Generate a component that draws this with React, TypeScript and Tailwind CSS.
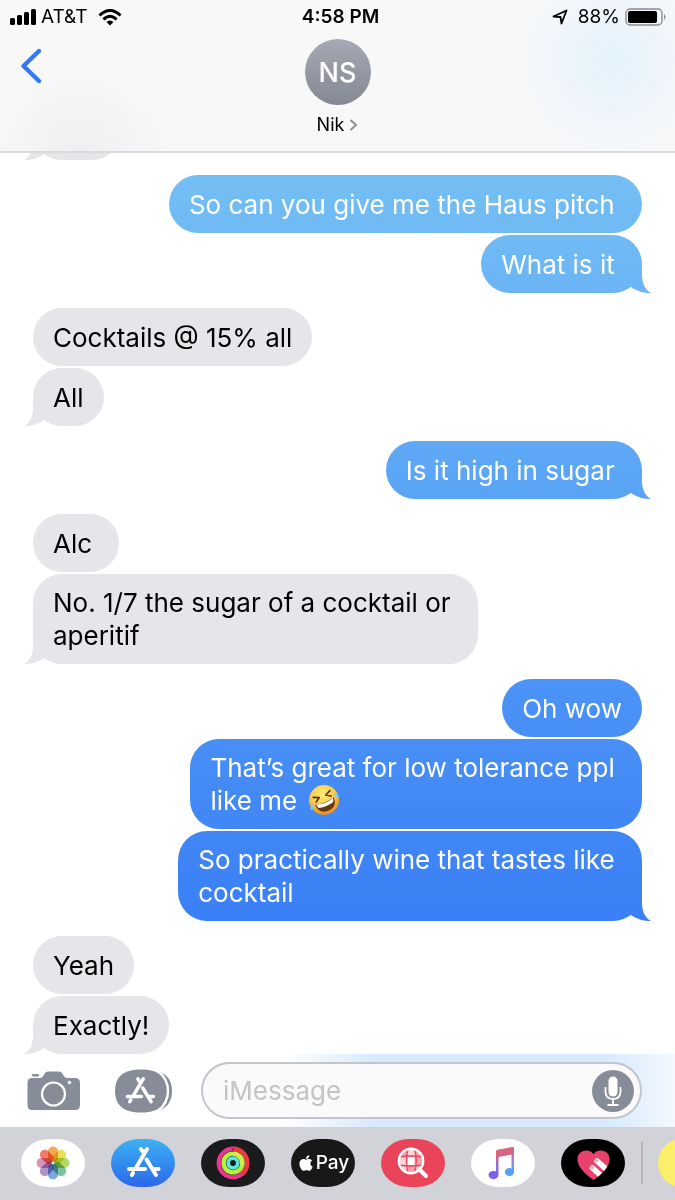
import type { ReactNode } from "react";
import { FaApple } from "react-icons/fa";

type Message = { from: "me" | "them"; text: string; emoji?: boolean };

const groups: Message[][] = [
  [
    { from: "me", text: "So can you give me the Haus pitch " },
    { from: "me", text: "What is it " },
  ],
  [
    { from: "them", text: "Cocktails @ 15% all" },
    { from: "them", text: "All" },
  ],
  [{ from: "me", text: "Is it high in sugar " }],
  [
    { from: "them", text: "Alc " },
    { from: "them", text: "No. 1/7 the sugar of a cocktail or \naperitif" },
  ],
  [
    { from: "me", text: "Oh wow" },
    { from: "me", text: "That’s great for low tolerance ppl \nlike me ", emoji: true },
    { from: "me", text: "So practically wine that tastes like \ncocktail" },
  ],
  [
    { from: "them", text: "Yeah" },
    { from: "them", text: "Exactly!" },
  ],
];

// Sent bubbles share one window-high gradient, so they get darker further down
const SENT =
  "bg-fixed bg-[linear-gradient(#7fcaf3,#74bef4_15%,#5ca6f6_39%,#4a91f6_59%,#3a7ff5_77%,#3a7ff5)] text-white";
const RECEIVED = "bg-[#e5e5ea] text-black";

function LaughEmoji() {
  return (
    <svg viewBox="0 0 32 32" role="img" aria-label="Rolling on the floor laughing" className="ml-1 inline-block size-8 align-[-6px]">
      <defs>
        <radialGradient id="face" cx="0.45" cy="0.3" r="0.7">
          <stop offset="0" stopColor="#ffec7a" />
          <stop offset="0.6" stopColor="#fbc845" />
          <stop offset="1" stopColor="#e08f22" />
        </radialGradient>
      </defs>
      <circle cx="16" cy="16" r="15" fill="url(#face)" />
      <g transform="rotate(-22 16 16)">
        <path d="M6 17 Q16 20 26 17 Q26 27.500 16 27.500 Q6 27.500 6 17Z" fill="#6b3710" />
        <path d="M7 17.500 Q16 20.500 25 17.500 Q25 20.500 23.500 21.500 Q16 23.500 8.500 21.500 Q7 20 7 17.500Z" fill="#fff" />
        <path d="M7 9.500 L12.500 12 L8 15 M25 9.500 L19.500 12 L24 15" fill="none" stroke="#56300f" strokeWidth="1.600" strokeLinecap="round" strokeLinejoin="round" />
        <path d="M26 15 Q31 14 31 18 Q29 20 26 15Z" fill="#7fcdf5" />
        <path d="M6 15 Q1 16 0 20 Q3 22 6 15Z" fill="#7fcdf5" />
      </g>
    </svg>
  );
}

function Tail({ sent }: { sent: boolean }) {
  return (
    <span
      aria-hidden="true"
      className={`absolute bottom-0 h-[29px] w-[31px] ${
        sent
          ? `${SENT} -right-[9px] [clip-path:path('M22_0L22_11C22_19_25_26_31_29C25_29_18_28_11_23L0_15L0_0Z')]`
          : `${RECEIVED} -left-[9px] [clip-path:path('M9_0L9_11C9_19_6_26_0_29C6_29_13_28_20_23L31_15L31_0Z')]`
      }`}
    />
  );
}

function Bubble({ message, tail }: { message: Message; tail: boolean }) {
  const sent = message.from === "me";
  return (
    <li
      className={`relative flex min-h-[58px] max-w-[80%] items-center rounded-[29px] px-5 py-3 ${
        sent ? `${SENT} self-end` : `${RECEIVED} self-start`
      }`}
    >
      {tail && <Tail sent={sent} />}
      <p className="relative whitespace-pre-wrap text-[26px] leading-[33px]">
        {message.text}
        {message.emoji && <LaughEmoji />}
      </p>
    </li>
  );
}

function StatusBar() {
  return (
    <div className="grid h-[34px] grid-cols-[1fr_auto_1fr] items-center pl-[10px] pr-2 text-[19px] leading-6">
      <div className="flex items-center">
        <svg viewBox="0 0 26 16" className="h-4 w-[26px]" aria-hidden="true">
          <rect x="0" y="9" width="5" height="7" rx="1.500" />
          <rect x="7" y="6" width="5" height="10" rx="1.500" />
          <rect x="14" y="3" width="5" height="13" rx="1.500" />
          <rect x="21" y="0" width="5" height="16" rx="1.500" />
        </svg>
        <span className="ml-[5px]">AT&amp;T</span>
        <svg viewBox="0 0 24 17" className="ml-[10px] h-[17px] w-6" aria-hidden="true">
          <path d="M1.500 6.500 Q12 -3.500 22.500 6.500" fill="none" stroke="#000" strokeWidth="3" />
          <path d="M5.500 10.500 Q12 4 18.500 10.500" fill="none" stroke="#000" strokeWidth="3" />
          <path d="M8.500 13 Q12 10 15.500 13 L12 16.500Z" />
        </svg>
      </div>
      <span className="pl-1 font-semibold">4:58 PM</span>
      <div className="flex items-center justify-end">
        <svg viewBox="0 0 16 16" className="size-4" aria-hidden="true">
          <path d="M1.500 7.500 L14.500 1.500 L9.500 14.500 L8.500 8 Z" fill="none" stroke="#000" strokeWidth="1.800" strokeLinejoin="round" />
        </svg>
        <span className="ml-[10px]">88%</span>
        <svg viewBox="0 0 42 18" className="ml-[5px] h-[18px] w-[42px]" aria-hidden="true">
          <rect x="1" y="1" width="36" height="16" rx="4" fill="none" stroke="#8c8c8e" strokeWidth="1.400" />
          <rect x="3" y="3" width="29" height="12" rx="2" />
          <path d="M39 6 Q42 9 39 12Z" fill="#8c8c8e" />
        </svg>
      </div>
    </div>
  );
}

function Header() {
  return (
    <header className="h-[153px] border-b-2 border-[#dadadc] bg-[#f8f8f9] bg-[radial-gradient(circle_at_612px_60px,#e3f2fc,transparent_100px),radial-gradient(circle_at_80px_150px,#efeff2,transparent_90px)]">
      <StatusBar />
      <div className="grid grid-cols-[1fr_auto_1fr] items-start px-5 pt-[5px]">
        <button type="button" aria-label="Back" className="mt-[9px] w-[22px]">
          <svg viewBox="0 0 22 36" className="h-9 w-[22px]">
            <path d="M19 3 L3.500 18 L19 33" fill="none" stroke="#3478f6" strokeWidth="4.400" strokeLinecap="round" strokeLinejoin="round" />
          </svg>
        </button>
        <button type="button" className="flex flex-col items-center">
          <span className="flex size-[66px] items-center justify-center rounded-full bg-linear-to-b from-[#a5a9b5] to-[#868993] pt-[2px] text-[27px] font-medium text-white">
            NS
          </span>
          <span className="mt-2 flex items-center gap-[5px] text-[18px] leading-6">
            Nik
            <svg viewBox="0 0 9 14" className="h-[14px] w-[9px]" aria-hidden="true">
              <path d="M1.500 2 L7 7 L1.500 12" fill="none" stroke="#8e8e93" strokeWidth="2" />
            </svg>
          </span>
        </button>
      </div>
    </header>
  );
}

// Crossed sticks of the App Store mark, on a 64x48 canvas
function StoreMark() {
  return (
    <g stroke="#fff" strokeWidth="4" strokeLinecap="round" fill="none">
      <path d="M36 10 L25.500 28" />
      <path d="M30 10 L31.500 12.500 M35.500 20.500 L45 36" />
      <path d="M18 30 L34 30 M43 30 L47.500 30" />
      <path d="M22 34 L20.800 36" />
    </g>
  );
}

function Composer() {
  return (
    <form
      className="flex items-center bg-white bg-[linear-gradient(90deg,transparent_42%,#d8ebfd_55%,#d8ebfd_90%,#f3f8fd)] py-2 pl-[27px] pr-[33px]"
      onSubmit={(e) => e.preventDefault()}
    >
      <button type="button" aria-label="Camera" className="shrink-0">
        <svg viewBox="0 0 54 40" className="h-10 w-[54px]">
          <path
            d="M5 7 H13 Q15 7 16.500 4.500 L18 2 Q19 0.500 21 0.500 H32 Q34 0.500 35 2 L36.500 4.500 Q38 7 40 7 H48 Q53 7 53 12 V34 Q53 39 48 39 H5 Q0.500 39 0.500 34 V12 Q0.500 7 5 7Z"
            fill="#868d98"
          />
          <rect x="5" y="3" width="7" height="2.500" rx="1" fill="#868d98" />
          <circle cx="26.500" cy="23" r="11.500" fill="none" stroke="#fff" strokeWidth="2.200" />
          <circle cx="42.500" cy="11.500" r="1.700" fill="#fff" />
        </svg>
      </button>
      <button type="button" aria-label="Apps" className="ml-[34px] shrink-0">
        <svg viewBox="0 0 58 44" className="h-11 w-[58px]">
          <path d="M43 2 Q57 7 57 22 Q57 37 43 42 Q50 34 50 22 Q50 10 43 2Z" fill="#868d98" />
          <path d="M22 0.500 H30 Q52 2 52 22 Q52 42 30 43.500 H22 Q0 42 0 22 Q0 2 22 0.500Z" fill="#868d98" />
          <path d="M43 2 Q53 10 53 22 Q53 34 43 42" fill="none" stroke="#fff" strokeWidth="2.400" />
          <g transform="translate(-3.500 1) scale(0.880)">
            <StoreMark />
          </g>
        </svg>
      </button>
      <div className="ml-7 flex h-[57px] min-w-0 flex-1 items-center rounded-full border-2 border-[#c2c5cb] bg-[#fafafa] pl-5 pr-[6px]">
        <input
          type="text"
          aria-label="Message"
          placeholder="iMessage"
          className="min-w-0 flex-1 bg-transparent text-[26px] leading-8 outline-none placeholder:text-[#c3c3c8]"
        />
        <button type="button" aria-label="Record audio" className="flex size-[42px] shrink-0 items-center justify-center rounded-full bg-[#868d98]">
          <svg viewBox="0 0 18 32" className="h-8 w-[18px]">
            <rect x="4.500" y="1.500" width="9" height="20" rx="4.500" fill="#fff" />
            <path d="M1.500 12 V16.500 Q1.500 24 9 24 Q16.500 24 16.500 16.500 V12 M9 24 V29.500 M3.500 30 H14.500" fill="none" stroke="#fff" strokeWidth="1.800" />
          </svg>
        </button>
      </div>
    </form>
  );
}

const petals = ["#f59a35", "#e6dc3c", "#a6cf50", "#66b98f", "#629ad8", "#9c82c0", "#cf84ae", "#ee6450"];

function PhotosIcon() {
  return (
    <svg viewBox="0 0 64 48">
      {petals.map((color, i) => (
        <rect
          key={color}
          x="27"
          y="7.500"
          width="10"
          height="15.500"
          rx="5"
          fill={color}
          opacity="0.850"
          transform={`rotate(${i * 45} 32 24)`}
          className="mix-blend-multiply"
        />
      ))}
      <circle cx="32" cy="24" r="1.200" fill="#fff" />
    </svg>
  );
}

function ActivityIcon() {
  return (
    <svg viewBox="0 0 64 48" fill="none" strokeWidth="4.400">
      <circle cx="32" cy="24" r="14.200" stroke="#e8358f" />
      <path d="M32 9.800 A14.200 14.200 0 0 1 41 35" stroke="#ee3a3e" />
      <circle cx="32" cy="24" r="9.400" stroke="#b4f43a" />
      <path d="M32 14.600 A9.400 9.400 0 0 1 41 26" stroke="#d2f04a" />
      <circle cx="32" cy="24" r="4.800" stroke="#5fe6dc" strokeWidth="3.800" />
      <path d="M32 9 V13" stroke="#1b1b1d" strokeWidth="0.600" />
    </svg>
  );
}

function SearchIcon() {
  return (
    <svg viewBox="0 0 64 48">
      <circle cx="30" cy="22" r="12" fill="#f7a0ab" />
      <path d="M26 18 H34 V26 H26Z M19 26 H26 V32 Q21 31 19 26Z M34 26 H41 Q39 31 34 33Z M26 10 H34 V18 H26Z M18 18 H26 V26 H18Z" fill="#fbd3d8" />
      <path d="M27 18 H33 V26 H27Z" fill="#fff" />
      <path d="M27 10 Q24 22 27 34 M33.500 10 Q37 22 33.500 34 M18 18 Q30 16 42 18 M18 26 Q30 28 42 26" fill="none" stroke="#ea445a" strokeWidth="1.300" />
      <circle cx="30" cy="22" r="12.200" fill="none" stroke="#fff" strokeWidth="2.400" />
      <path d="M39.500 31.500 L45 37" stroke="#fff" strokeWidth="4" strokeLinecap="round" />
    </svg>
  );
}

function MusicIcon() {
  return (
    <svg viewBox="0 0 64 48">
      <defs>
        <linearGradient id="note" x1="0" y1="8" x2="0" y2="40" gradientUnits="userSpaceOnUse">
          <stop offset="0" stopColor="#e0637c" />
          <stop offset="0.250" stopColor="#c9628f" />
          <stop offset="0.650" stopColor="#8a72e0" />
          <stop offset="1" stopColor="#7b5cf0" />
        </linearGradient>
        <linearGradient id="noteRight" x1="0" y1="8" x2="0" y2="36" gradientUnits="userSpaceOnUse">
          <stop offset="0" stopColor="#e0637c" />
          <stop offset="0.300" stopColor="#b878b8" />
          <stop offset="0.700" stopColor="#6e96ee" />
          <stop offset="1" stopColor="#48a4fa" />
        </linearGradient>
      </defs>
      <rect x="25" y="12" width="2.500" height="23" fill="url(#note)" />
      <rect x="40.500" y="9" width="2.500" height="23" fill="url(#noteRight)" />
      <path d="M25 12.500 Q25 11 26.500 10.700 L41.500 8 Q43 7.800 43 9 V15 L25 18.500Z" fill="#d8647f" />
      <ellipse cx="22.500" cy="36" rx="5" ry="4" fill="#7b5ff0" />
      <ellipse cx="38.500" cy="33" rx="4.600" ry="4" fill="#4fa2f8" />
    </svg>
  );
}

function HeartIcon() {
  return (
    <svg viewBox="0 0 64 48">
      <defs>
        <clipPath id="heart">
          <path d="M32.500 41 C25 35.500 16 28 16.500 19.500 C17 11 28 9 32.500 15 C37 9 48 11 48.500 19.500 C49 28 40 35.500 32.500 41Z" />
        </clipPath>
      </defs>
      <g clipPath="url(#heart)">
        <rect x="14" y="8" width="38" height="34" fill="#e8426a" />
        <path d="M36 22 L50 34.500 M31.500 29 L46 42" stroke="#fff" strokeWidth="5.600" strokeLinecap="round" />
      </g>
      <circle cx="35.500" cy="21.500" r="1.700" fill="#f3a0b4" />
      <circle cx="31" cy="28.500" r="1.700" fill="#f3a0b4" />
    </svg>
  );
}

const apps: { name: string; tone: string; icon: ReactNode }[] = [
  { name: "Photos", tone: "bg-white", icon: <PhotosIcon /> },
  {
    name: "App Store",
    tone: "bg-linear-to-b from-[#3fb1f2] to-[#2f65ea]",
    icon: (
      <svg viewBox="0 0 64 48">
        <StoreMark />
      </svg>
    ),
  },
  { name: "Activity", tone: "bg-[#1b1b1d]", icon: <ActivityIcon /> },
  {
    name: "Apple Pay",
    tone: "bg-[#181818]",
    icon: (
      <span className="flex items-center justify-center gap-px text-[19px] font-medium leading-6 text-white">
        <FaApple className="size-[18px] shrink-0" aria-hidden="true" />
        Pay
      </span>
    ),
  },
  { name: "Images", tone: "bg-[#ea445a]", icon: <SearchIcon /> },
  { name: "Music", tone: "bg-white", icon: <MusicIcon /> },
  { name: "Digital Touch", tone: "bg-black", icon: <HeartIcon /> },
];

function AppStrip() {
  return (
    <nav aria-label="iMessage apps" className="flex items-center overflow-hidden bg-[#d1d3d9] pb-[13px] pl-[21px] pt-3">
      <div className="flex shrink-0 gap-[26px]">
        {apps.map((app) => (
          <button
            key={app.name}
            type="button"
            aria-label={app.name}
            className={`flex h-12 w-16 flex-col justify-center overflow-hidden rounded-[28px/24px] ${app.tone}`}
          >
            <span className="block w-full">{app.icon}</span>
          </button>
        ))}
      </div>
      <span className="ml-4 h-[42px] w-[2px] shrink-0 bg-[#b4b6bc]" />
      <button type="button" aria-label="More" className="ml-[15px] h-12 w-16 shrink-0 rounded-3xl bg-[#fbee68]" />
    </nav>
  );
}

export default function App() {
  return (
    <div className="flex min-h-screen flex-col bg-white font-['Inter','Liberation_Sans',sans-serif] text-black">
      <Header />
      <main className="flex flex-1 flex-col gap-[15px] overflow-hidden px-[33px]">
        {/* Older bubble, scrolled up behind the header */}
        <div className={`relative -mt-[51px] h-[58px] w-[88px] rounded-[29px] ${RECEIVED}`}>
          <Tail sent={false} />
        </div>
        {groups.map((group, i) => (
          <ul key={i} className="flex flex-col gap-[2px]">
            {group.map((message, j) => (
              <Bubble key={j} message={message} tail={j === group.length - 1} />
            ))}
          </ul>
        ))}
      </main>
      <Composer />
      <AppStrip />
    </div>
  );
}
